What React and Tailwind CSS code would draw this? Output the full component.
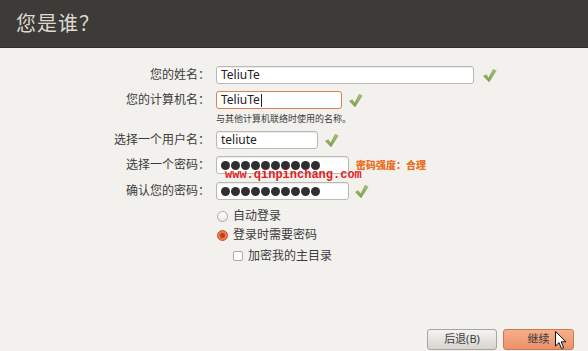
const cjk = { fontFamily: '"Noto Sans", "Noto Sans CJK SC", sans-serif' };

function Check({ className = '' }) {
  return (
    <svg viewBox="0 0 16 16" className={`w-[15px] h-[15px] ${className}`}>
      <defs>
        <linearGradient id="chk" x1="0" y1="0" x2="0" y2="1">
          <stop offset="0" stopColor="#a6c077" />
          <stop offset="1" stopColor="#7f9e4d" />
        </linearGradient>
      </defs>
      <path d="M1 8.6 L4.6 6.6 L7 10 L11.8 0.8 L15.6 2.8 L7.6 15.2 Z" fill="url(#chk)" />
    </svg>
  );
}

function Field({ label, width, focused, children, after }) {
  return (
    <div className="flex items-center h-[18px]">
      <div className="w-[210px] text-right text-[12px] text-[#3c3c3c] leading-none">{label}</div>
      <div
        className={`ml-[6px] h-[18px] ${width} bg-white rounded-[3px] border flex items-center px-[4px] text-[12px] text-[#222] ${
          focused ? 'border-[#dd7e55]' : 'border-[#b9b8b2] shadow-[inset_0_1px_1px_rgba(0,0,0,0.08)]'
        }`}
      >
        {children}
      </div>
      {after}
    </div>
  );
}

function Dots() {
  return (
    <div className="flex gap-[1px]">
      {Array.from({ length: 10 }).map((_, i) => (
        <span key={i} className="w-[9px] h-[9px] rounded-full bg-[#2f2f2f]" />
      ))}
    </div>
  );
}

export default function App() {
  return (
    <div className="w-[588px] h-[351px] bg-[#f2f1ed] flex flex-col relative overflow-hidden" style={cjk}>
      {/* Header */}
      <header className="h-[48px] bg-[#3c3b37] flex items-center pl-[16px] border-b border-[#2f2e2b]">
        <h1 className="text-[20px] text-[#dedad2] tracking-[1px]">您是谁？</h1>
      </header>

      {/* Form */}
      <div className="pt-[18px] flex flex-col">
        <Field label="您的姓名：" width="w-[258px]" after={<Check className="ml-[8px]" />}>
          TeliuTe
        </Field>

        <div className="mt-[7px]">
          <Field label="您的计算机名：" width="w-[126px]" focused after={<Check className="ml-[6px]" />}>
            TeliuTe<span className="w-px h-[13px] bg-[#222] ml-[1px]" />
          </Field>
        </div>

        <div className="pl-[216px] mt-[3px] h-[14px] flex items-center text-[9px] text-[#3c3c3c]">
          与其他计算机联络时使用的名称。
        </div>

        <div className="mt-[5px]">
          <Field label="选择一个用户名：" width="w-[102px]" after={<Check className="ml-[6px]" />}>
            teliute
          </Field>
        </div>

        <div className="mt-[7px]">
          <Field
            label="选择一个密码："
            width="w-[133px]"
            after={<span className="ml-[7px] text-[10px] font-black text-[#ea6f22]">密码强度：合理</span>}
          >
            <Dots />
          </Field>
        </div>

        <div className="mt-[8px]">
          <Field label="确认您的密码：" width="w-[133px]" after={<Check className="ml-[5px]" />}>
            <Dots />
          </Field>
        </div>

        {/* Options */}
        <div className="pl-[217px] mt-[8px] flex flex-col text-[12px] text-[#3c3c3c]">
          <label className="flex items-center h-[16px] gap-[5px]">
            <span className="w-[11px] h-[11px] rounded-full border border-[#a9a8a3] bg-gradient-to-b from-white to-[#e9e8e4]" />
            自动登录
          </label>
          <label className="flex items-center h-[16px] gap-[5px] mt-[3px]">
            <span className="w-[11px] h-[11px] rounded-full border border-[#c8542b] bg-[#ec7a4c] flex items-center justify-center">
              <span className="w-[5px] h-[5px] rounded-full bg-[#b8421d]" />
            </span>
            登录时需要密码
          </label>
          <label className="flex items-center h-[16px] gap-[5px] mt-[5px] ml-[16px]">
            <span className="w-[10px] h-[10px] rounded-[2px] border border-[#a9a8a3] bg-white" />
            加密我的主目录
          </label>
        </div>
      </div>

      {/* Buttons */}
      <div className="mt-auto mb-[1px] flex justify-end gap-[6px] pr-[14px]">
        <button className="w-[70px] h-[21px] rounded-[3px] border border-[#a6a5a0] bg-gradient-to-b from-[#f4f3f0] to-[#d6d5d0] text-[11px] text-[#3c3c3c]">
          后退(B)
        </button>
        <button className="w-[71px] h-[21px] rounded-[3px] border border-[#c97a55] bg-gradient-to-b from-[#f6ae8a] to-[#ec926a] text-[11px] text-[#3c3c3c]">
          继续
        </button>
      </div>

      {/* Watermark */}
      <div
        className="absolute left-[225px] top-[169px] text-[12px] font-bold text-[#e01f25] leading-none"
        style={{ fontFamily: '"Liberation Mono", monospace' }}
      >
        www.qinpinchang.com
      </div>

      {/* Mouse cursor */}
      <svg viewBox="0 0 12 19" className="absolute left-[555px] top-[331px] w-[12px] h-[19px]">
        <path d="M0.5 0.5 L0.5 15 L4 11.6 L6.5 17.5 L8.6 16.6 L6.2 10.8 L11 10.8 Z" fill="#fff" stroke="#111" strokeWidth="1" strokeLinejoin="round" />
      </svg>
    </div>
  );
}
